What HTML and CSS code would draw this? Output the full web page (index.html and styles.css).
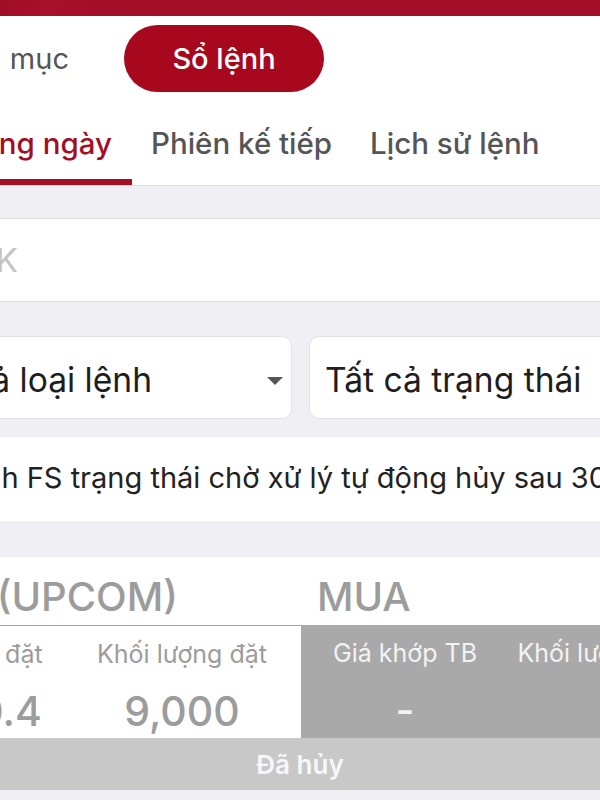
FILE: index.html
```html
<!DOCTYPE html>
<html lang="vi">
<head>
    <meta charset="UTF-8">
    <meta name="viewport" content="width=device-width, initial-scale=1.0">
    <title>Sổ lệnh</title>
    <link rel="stylesheet" href="styles.css">
</head>
<body>
    <!-- thanh trên cùng -->
    <div class="topbar"></div>

    <!-- chọn màn hình + tab -->
    <header class="header">
        <div class="segment">
            <div class="segment-item segment-first"><span>Danh mục</span></div>
            <div class="segment-item segment-active">Sổ lệnh</div>
        </div>
        <nav class="tabs">
            <div class="tab tab-current"><span>Trong ngày</span></div>
            <div class="tab">Phiên kế tiếp</div>
            <div class="tab">Lịch sử lệnh</div>
        </nav>
    </header>

    <!-- tìm mã -->
    <div class="search">
        <span class="search-text">Mã CK</span>
    </div>

    <!-- bộ lọc -->
    <div class="filters">
        <div class="select select-first">
            <span class="select-text">Tất cả loại lệnh</span>
            <span class="caret"></span>
        </div>
        <div class="select select-second">Tất cả trạng thái</div>
    </div>

    <div class="note">
        <span class="note-text">Lệnh FS trạng thái chờ xử lý tự động hủy sau 30 phút</span>
    </div>

    <!-- thẻ lệnh -->
    <div class="order">
        <div class="order-head">
            <span class="order-code"><span>KSB (UPCOM)</span></span>
            <span class="order-side">MUA</span>
        </div>
        <div class="order-body">
            <div class="order-placed">
                <div class="col col-price">
                    <span class="col-label">Giá đặt</span>
                    <span class="col-value">10.4</span>
                </div>
                <div class="col col-volume">
                    <span class="col-label">Khối lượng đặt</span>
                    <span class="col-value">9,000</span>
                </div>
            </div>
            <div class="order-matched">
                <div class="col col-avg">
                    <span class="col-label">Giá khớp TB</span>
                    <span class="col-value">-</span>
                </div>
                <div class="col col-matched">
                    <span class="col-label">Khối lượng khớp</span>
                    <span class="col-value">-</span>
                </div>
            </div>
        </div>
        <div class="order-status">Đã hủy</div>
    </div>
</body>
</html>
```

FILE: styles.css
```css
/* trang */
body {
    margin: 0;
    width: 600px;
    height: 800px;
    overflow: hidden;
    background: #efeff4;
    font-family: "Inter", "Roboto", sans-serif;
}

/* thanh đỏ trên cùng */
.topbar {
    height: 16px;
    background: linear-gradient(100deg, #9f0d24 0%, #a8112a 8%, #a20e26 20%, #a30f27 100%);
}

.header {
    background: #fff;
}

/* Danh mục / Sổ lệnh */
.segment {
    display: flex;
    align-items: center;
    padding-top: 9px;
}

.segment-item {
    font-size: 29px;
    color: #555;
    white-space: nowrap;
}

.segment-first {
    width: 69px;
    display: flex;
    justify-content: flex-end;
    overflow: hidden;
}

.segment-active {
    margin-left: 55px;
    width: 200px;
    height: 67px;
    border-radius: 34px;
    background: #a8081e;
    color: #fff;
    font-weight: 500;
    display: flex;
    align-items: center;
    justify-content: center;
}

/* tab */
.tabs {
    display: flex;
    border-bottom: 1px solid #dcdcdf;
}

.tab {
    font-size: 29.5px;
    font-weight: 500;
    line-height: 40px;
    color: #555;
    padding: 31px 19px 16px;
    border-bottom: 6px solid transparent;
    white-space: nowrap;
}

.tab-current {
    width: 132px;
    box-sizing: border-box;
    padding-left: 0;
    padding-right: 20px;
    display: flex;
    justify-content: flex-end;
    overflow: hidden;
    color: #a30d25;
    border-bottom-color: #a30d25;
}

/* ô tìm kiếm */
.search {
    margin-top: 32px;
    height: 82px;
    background: #fff;
    border-top: 1px solid #dedee1;
    border-bottom: 1px solid #dedee1;
    display: flex;
    align-items: center;
    font-size: 33px;
    color: #c4c4c4;
}

.search-text {
    width: 18px;
    display: flex;
    justify-content: flex-end;
    overflow: hidden;
    white-space: nowrap;
}

/* bộ lọc */
.filters {
    display: flex;
    gap: 17px;
    margin-top: 34px;
}

.select {
    height: 83px;
    box-sizing: border-box;
    padding-top: 4px;
    background: #fff;
    border: 1px solid #e3e3e6;
    border-radius: 10px;
    display: flex;
    align-items: center;
    font-size: 33.6px;
    color: #1e1e1e;
    white-space: nowrap;
}

.select-first {
    flex: 0 0 312px;
    margin-left: -20px;
    padding-left: 19px;
}

.select-text {
    width: 152px;
    display: flex;
    justify-content: flex-end;
    overflow: hidden;
}

.caret {
    margin-left: auto;
    margin-right: 8px;
    margin-top: 2px;
    width: 0;
    height: 0;
    border-left: 8px solid transparent;
    border-right: 8px solid transparent;
    border-top: 8px solid #555;
}

.select-second {
    flex: 1 0 auto;
    margin-right: -60px;
    padding-left: 15px;
}

/* ghi chú */
.note {
    margin-top: 18px;
    height: 84px;
    box-sizing: border-box;
    padding-bottom: 4px;
    background: #fff;
    display: flex;
    align-items: center;
    font-size: 29px;
    color: #222;
    white-space: nowrap;
    overflow: hidden;
}

.note-text {
    margin-left: -49px;
}

/* thẻ lệnh */
.order {
    margin-top: 36px;
    background: #fff;
}

.order-head {
    height: 68px;
    box-sizing: border-box;
    padding-top: 10px;
    display: flex;
    align-items: center;
    font-size: 40px;
    font-weight: 500;
    color: #9c9c9c;
    white-space: nowrap;
}

.order-code {
    width: 178px;
    display: flex;
    justify-content: flex-end;
    overflow: hidden;
}

.order-side {
    margin-left: 139px;
}

.order-body {
    display: flex;
    height: 113px;
}

.order-placed {
    flex: 0 0 301px;
    box-sizing: border-box;
    border-top: 1px solid #a6a6a6;
    display: flex;
    overflow: hidden;
    color: #9c9c9c;
}

.order-matched {
    flex: 1 1 auto;
    background: #a9a9a9;
    display: flex;
    overflow: hidden;
    color: #f3f3f3;
}

.col {
    flex-shrink: 0;
    display: flex;
    flex-direction: column;
    align-items: center;
    white-space: nowrap;
}

.col-label {
    font-size: 25px;
    line-height: 30px;
    margin-top: 13px;
}

.col-value {
    font-size: 41px;
    font-weight: 500;
    line-height: 48px;
    margin-top: 18px;
}

.col-price {
    margin-left: -90px;
    width: 182px;
}

.col-volume {
    width: 180px;
}

.col-avg {
    width: 208px;
}

.col-matched {
    width: 208px;
}

.order-status {
    height: 52px;
    background: #c8c8c8;
    color: #f7f7f7;
    font-size: 26px;
    font-weight: 600;
    display: flex;
    align-items: center;
    justify-content: center;
}
```
